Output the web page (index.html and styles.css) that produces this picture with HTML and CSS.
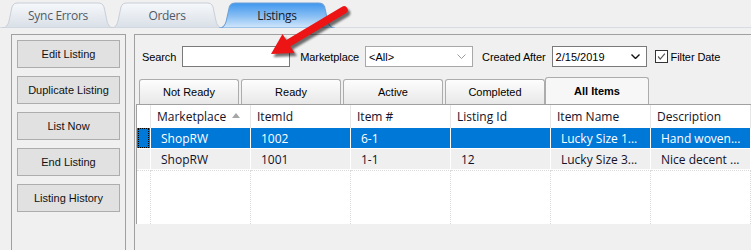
FILE: index.html
```html
<!DOCTYPE html>
<html lang="en">
<head>
    <meta charset="UTF-8">
    <title>Listings</title>
    <link rel="stylesheet" href="styles.css">
</head>
<body>
    <div class="toptabs">
        <div class="ttab">
            <svg class="tabshape" viewBox="0 0 112 26" preserveAspectRatio="none"><path d="M0 26 C4 26 6 23 7 19 L10 5 C11 2 13 1 16 1 L96 1 C99 1 101 2 102 5 L105 19 C106 23 108 26 112 26 Z" fill="url(#tgrey)" stroke="#c8cfd8"/></svg>
            <span>Sync Errors</span>
        </div>
        <div class="ttab">
            <svg class="tabshape" viewBox="0 0 112 26" preserveAspectRatio="none"><path d="M0 26 C4 26 6 23 7 19 L10 5 C11 2 13 1 16 1 L96 1 C99 1 101 2 102 5 L105 19 C106 23 108 26 112 26 Z" fill="url(#tgrey)" stroke="#c8cfd8"/></svg>
            <span>Orders</span>
        </div>
        <div class="ttab active">
            <svg class="tabshape" viewBox="0 0 112 26" preserveAspectRatio="none"><path d="M0 26 C4 26 6 23 7 19 L10 5 C11 2 13 1 16 1 L96 1 C99 1 101 2 102 5 L105 19 C106 23 108 26 112 26 Z" fill="url(#tblue)" stroke="#6a9fd6"/></svg>
            <span>Listings</span>
        </div>
    </div>

    <div class="main">
        <div class="sidebar">
            <button>Edit Listing</button>
            <button>Duplicate Listing</button>
            <button>List Now</button>
            <button>End Listing</button>
            <button>Listing History</button>
        </div>

        <div class="panel">
            <div class="filters">
                <label class="lbl">Search</label>
                <div class="field search"></div>
                <label class="lbl market">Marketplace</label>
                <div class="field combo">
                    <span>&lt;All&gt;</span>
                    <svg class="chev light" viewBox="0 0 9 5"><polyline points="0.5,0.5 4.5,4.5 8.5,0.5" fill="none" stroke="#9a9a9a"/></svg>
                </div>
                <label class="lbl created">Created After</label>
                <div class="field date">
                    <span>2/15/2019</span>
                    <svg class="chev" viewBox="0 0 9 5"><polyline points="0.5,0.5 4.5,4.5 8.5,0.5" fill="none" stroke="#111" stroke-width="1.4"/></svg>
                </div>
                <span class="check">
                    <svg viewBox="0 0 13 13"><polyline points="2.5,6.5 5,9.5 10.5,3" fill="none" stroke="#555" stroke-width="1.4"/></svg>
                </span>
                <label class="lbl">Filter Date</label>
            </div>

            <div class="subtabs">
                <div class="stab">Not Ready</div>
                <div class="stab">Ready</div>
                <div class="stab">Active</div>
                <div class="stab">Completed</div>
                <div class="stab selected">All Items</div>
            </div>

            <div class="tabpage">
                <div class="grid">
                    <div class="row head">
                        <div class="cell rh"></div>
                        <div class="cell">Marketplace<span class="sort"></span></div>
                        <div class="cell">ItemId</div>
                        <div class="cell">Item #</div>
                        <div class="cell">Listing Id</div>
                        <div class="cell">Item Name</div>
                        <div class="cell">Description</div>
                    </div>
                    <div class="row sel">
                        <div class="cell rh"><span class="focus"></span></div>
                        <div class="cell">ShopRW</div>
                        <div class="cell">1002</div>
                        <div class="cell">6-1</div>
                        <div class="cell"></div>
                        <div class="cell">Lucky Size 1...</div>
                        <div class="cell">Hand woven...</div>
                    </div>
                    <div class="row alt">
                        <div class="cell rh"></div>
                        <div class="cell">ShopRW</div>
                        <div class="cell">1001</div>
                        <div class="cell">1-1</div>
                        <div class="cell">12</div>
                        <div class="cell">Lucky Size 3...</div>
                        <div class="cell">Nice decent ...</div>
                    </div>
                    <div class="row filler">
                        <div class="cell rh"></div>
                        <div class="cell"></div>
                        <div class="cell"></div>
                        <div class="cell"></div>
                        <div class="cell"></div>
                        <div class="cell"></div>
                        <div class="cell"></div>
                    </div>
                </div>
            </div>
        </div>
    </div>

    <!-- red callout arrow over the search box -->
    <svg class="arrow" viewBox="258 0 100 66">
        <defs>
            <linearGradient id="tgrey" x1="0" y1="0" x2="0" y2="1">
                <stop offset="0" stop-color="#f6f8fb"/>
                <stop offset="1" stop-color="#d9dfe7"/>
            </linearGradient>
            <linearGradient id="tblue" x1="0" y1="0" x2="0" y2="1">
                <stop offset="0" stop-color="#3f97ee"/>
                <stop offset="0.55" stop-color="#8cc0f4"/>
                <stop offset="1" stop-color="#d4e8fb"/>
            </linearGradient>
            <filter id="soft" x="-20%" y="-20%" width="140%" height="140%">
                <feGaussianBlur stdDeviation="1.3"/>
            </filter>
        </defs>
        <g transform="translate(2.5 3)" filter="url(#soft)" opacity="0.55">
            <line x1="344" y1="10" x2="287" y2="44" stroke="#000" stroke-width="7.5" stroke-linecap="round"/>
            <polygon points="271,54 282.5,34 294.5,53" fill="#000"/>
        </g>
        <line x1="344" y1="10" x2="287" y2="44" stroke="#ec1414" stroke-width="7.5" stroke-linecap="round"/>
        <polygon points="271,54 282.5,34 294.5,53" fill="#ec1414"/>
    </svg>
</body>
</html>
```

FILE: styles.css
```css
* {
    margin: 0;
    padding: 0;
    box-sizing: border-box;
}

body {
    position: relative;
    width: 751px;
    height: 250px;
    overflow: hidden;
    background: #f0f0f0;
    font-family: 'Liberation Sans', Arial, sans-serif;
    font-size: 11px;
    color: #000;
}

/* top tab strip */
.toptabs {
    display: flex;
    height: 28px;
    padding: 2px 0 0 2px;
    border-bottom: 1px solid #d7dce3;
}

.ttab {
    position: relative;
    width: 112px;
    height: 26px;
    margin-right: -3px;
    display: flex;
    align-items: center;
    justify-content: center;
    font-family: 'Open Sans', sans-serif;
    font-size: 12px;
    letter-spacing: -0.3px;
    color: #505a66;
}

.ttab.active {
    width: 116px;
    margin-left: -1px;
    color: #15202c;
}

.tabshape {
    position: absolute;
    top: 0;
    left: 0;
    width: 100%;
    height: 100%;
}

.ttab span {
    position: relative;
    padding-top: 1px;
}

/* body */
.main {
    display: flex;
    margin-top: 6px;
}

.sidebar {
    width: 115px;
    height: 216px;
    margin-left: 11px;
    padding: 5px 0 0 5px;
    border: 1px solid #a0a0a0;
    border-bottom: none;
    display: flex;
    flex-direction: column;
    gap: 8px;
}

button {
    width: 103px;
    height: 28px;
    border: 1px solid #adadad;
    background: #e1e1e1;
    font-family: 'Liberation Sans', Arial, sans-serif;
    font-size: 11px;
    color: #111;
}

.panel {
    flex: 1;
    height: 216px;
    margin-left: 8px;
    border-top: 1px solid #a0a0a0;
    border-left: 1px solid #a0a0a0;
}

/* filter row */
.filters {
    display: flex;
    align-items: center;
    height: 21px;
    margin-top: 11px;
    padding-left: 7px;
}

.lbl {
    color: #000;
    letter-spacing: -0.1px;
}

.field {
    height: 21px;
    border: 1px solid #7a7a7a;
    background: #fff;
    display: flex;
    align-items: center;
    justify-content: space-between;
    padding: 0 6px 0 3px;
}

.search {
    width: 108px;
    margin: 0 10px 0 6px;
}

.combo {
    width: 108px;
    margin: 0 9px 0 6px;
    border-color: #a8a8a8;
}

.date {
    width: 95px;
    margin: 0 8px 0 6px;
}

.chev {
    width: 9px;
    height: 5px;
}

.check {
    width: 13px;
    height: 13px;
    margin-right: 3px;
    border: 1px solid #333;
    background: #fff;
}

.check svg {
    display: block;
    width: 11px;
    height: 11px;
}

/* inner tabs */
.subtabs {
    display: flex;
    align-items: flex-end;
    height: 27px;
    margin-top: 10px;
    padding-left: 4px;
}

.stab {
    width: 100px;
    height: 25px;
    margin-right: 2px;
    padding-top: 6px;
    text-align: center;
    border: 1px solid #acacac;
    border-bottom: none;
    border-radius: 3px 3px 0 0;
    background: linear-gradient(#fdfdfd, #e8e8e8);
}

.stab.selected {
    width: 104px;
    height: 27px;
    margin-left: -2px;
    padding-top: 7px;
    font-weight: bold;
    background: #f7f7f7;
}

/* grid */
.tabpage {
    margin-left: 1px;
    height: 120px;
    border-top: 1px solid #a0a0a0;
    border-left: 1px solid #a0a0a0;
    background: #fff;
    overflow: hidden;
}

.grid {
    font-family: 'Open Sans', sans-serif;
    font-size: 12px;
    color: #12122a;
}

.row {
    display: grid;
    grid-template-columns: 14px repeat(6, 100px);
}

.cell {
    display: flex;
    align-items: center;
    padding-left: 10px;
    white-space: nowrap;
    overflow: hidden;
    border-right: 1px solid #fff;
}

.cell.rh {
    padding: 0;
    background: #fff;
}

.head .cell {
    height: 23px;
    padding-left: 6px;
    background: #fff;
    border-right-color: #e6e6e6;
}

.sort {
    width: 0;
    height: 0;
    margin: 0 0 2px 6px;
    border-left: 4.5px solid transparent;
    border-right: 4.5px solid transparent;
    border-bottom: 5px solid #a6a6a6;
}

.sel .cell,
.alt .cell {
    height: 21px;
    border-bottom: 1px solid #fff;
}

.sel .cell {
    background: #0078d7;
    color: #fff;
}

.alt .cell {
    background: #efefef;
}

.focus {
    display: block;
    width: 11px;
    height: 20px;
    margin-left: 1px;
    border: 1px dotted #000;
}

.filler .cell {
    height: 90px;
    border-top: 1px dotted #dadada;
    border-right: 1px dotted #dadada;
}

/* callout arrow */
.arrow {
    position: absolute;
    left: 258px;
    top: 0;
    width: 100px;
    height: 66px;
    pointer-events: none;
}
```
